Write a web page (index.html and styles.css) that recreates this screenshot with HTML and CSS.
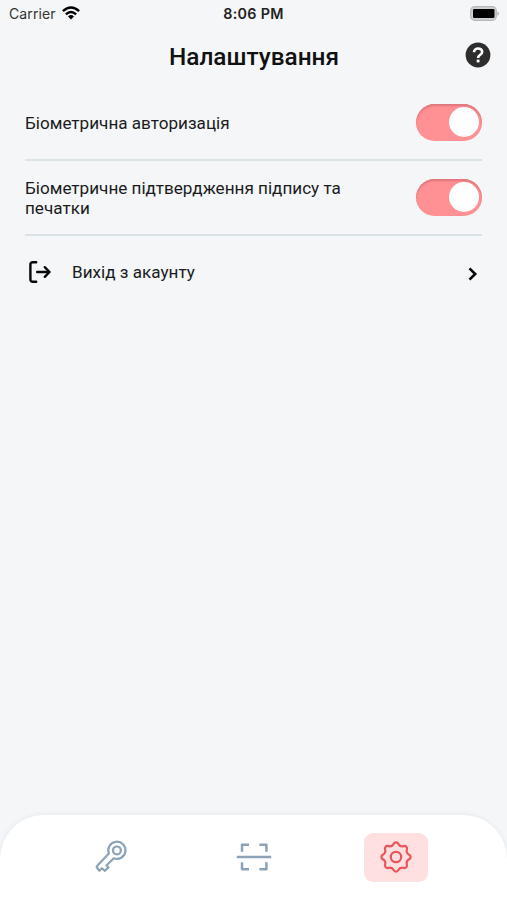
FILE: index.html
```html
<!DOCTYPE html>
<html lang="uk">
<head>
<meta charset="utf-8">
<title>Налаштування</title>
<link rel="stylesheet" href="styles.css">
</head>
<body>
<div class="screen">
  <div class="status">
    <div class="carrier"><span>Carrier</span>
      <svg width="18" height="14" viewBox="0 0 18 14"><g fill="none" stroke="#000" stroke-width="2.5"><path d="M.9 5.2Q9-2.2 17.1 5.2"/><path d="M3.9 8.3Q9 3.6 14.1 8.3"/></g><path d="M6 10.4Q9 7.8 12 10.4L9 13.5z"/></svg>
    </div>
    <span class="time">8:06 PM</span>
    <svg class="battery" width="30" height="15" viewBox="0 0 30 15"><rect x=".7" y=".7" width="25.6" height="13.6" rx="4" fill="#d0d1d2" stroke="#b8b9ba" stroke-width="1.3"/><rect x="3" y="3" width="21.5" height="9" rx="1.2"/><path d="M27.5 5.2q3 2.3 0 4.6z" fill="#aaa"/></svg>
  </div>
  <header class="header">
    <h1>Налаштування</h1>
    <svg class="help" width="26" height="26" viewBox="0 0 26 26"><circle cx="13" cy="13" r="12.4" fill="#2d2d2e"/><path d="M9 10.3C9 5.2 17.2 5.4 17.2 10C17.2 12.9 13.1 12.6 13.1 16" fill="none" stroke="#fff" stroke-width="2.6"/><rect x="11.7" y="17.6" width="2.8" height="2.8" fill="#fff"/></svg>
  </header>
  <main class="list">
    <div class="row"><span class="label">Біометрична авторизація</span><span class="toggle"><i></i></span></div>
    <div class="row"><span class="label">Біометричне підтвердження підпису та печатки</span><span class="toggle"><i></i></span></div>
    <div class="row logout">
      <svg width="24" height="24" viewBox="0 0 24 24" fill="none" stroke="#080808" stroke-width="2.4" stroke-linecap="round" stroke-linejoin="round"><path d="M8.2 2.2H4.8Q2.4 2.2 2.4 4.7V19.3Q2.4 21.8 4.8 21.8H8.2M9.2 12H21.5M16.8 7.2L21.5 12L16.8 16.8"/></svg>
      <span class="label">Вихід з акаунту</span>
      <svg class="chevron" width="10" height="14" viewBox="0 0 10 14" fill="none" stroke="#080808" stroke-width="2.6"><path d="M1.5 1.4L7.2 7L1.5 12.6"/></svg>
    </div>
  </main>
  <nav class="tabs">
    <span class="tab"><svg width="36" height="36" viewBox="93.3 839 36 36" fill="none" stroke="#8ba2b7" stroke-width="2.2" stroke-linejoin="round"><path d="M109.2 853.5A8.6 8.6 0 1 1 114 858.3L106.7 865.5L108.8 867.5L105 870.8L102.3 868.4L99.7 870.7L97 867.3Q97 866.3 98 865.3Z"/><circle cx="117.2" cy="850.4" r="3.9"/></svg></span>
    <span class="tab"><svg width="36" height="36" viewBox="0 0 36 36" fill="none" stroke="#8ba2b7" stroke-width="2.5" stroke-linejoin="round"><path d="M.8 18H35.2M13 5.8H6V12.8M23.4 5.8H30.4V12.8M6 23.2V30.2H13M30.4 23.2V30.2H23.4"/></svg></span>
    <span class="tab active"><svg width="34" height="34" viewBox="-17 -17 34 34" fill="none" stroke="#eb5458" stroke-width="2.2" stroke-linejoin="round"><path d="M13.1-2.31A2.53 2.53 0 0 1 13.1 2.31A4.6 4.6 0 0 0 10.89 7.63A2.53 2.53 0 0 1 7.63 10.89A4.6 4.6 0 0 0 2.31 13.1A2.53 2.53 0 0 1-2.31 13.1A4.6 4.6 0 0 0-7.63 10.89A2.53 2.53 0 0 1-10.89 7.63A4.6 4.6 0 0 0-13.1 2.31A2.53 2.53 0 0 1-13.1-2.31A4.6 4.6 0 0 0-10.89-7.63A2.53 2.53 0 0 1-7.63-10.89A4.6 4.6 0 0 0-2.31-13.1A2.53 2.53 0 0 1 2.31-13.1A4.6 4.6 0 0 0 7.63-10.89A2.53 2.53 0 0 1 10.89-7.63A4.6 4.6 0 0 0 13.1-2.31Z"/><circle r="5.2"/></svg></span>
  </nav>
</div>
</body>
</html>
```
FILE: styles.css
```css
* { box-sizing: border-box; }
body { margin: 0; background: #f4f6f8; color: #1b1b1d; font-family: Roboto, sans-serif; }
svg { display: block; flex: none; }
.screen { height: 900px; display: flex; flex-direction: column; overflow: hidden; }
.status { height: 26px; display: grid; grid-template-columns: 1fr auto 1fr; align-items: center; padding: 0 7px 0 9px; font-family: Inter, sans-serif; font-size: 14px; }
.carrier { display: flex; align-items: center; gap: 6px; letter-spacing: .1px; color: #333; }
.time { font-weight: 600; font-size: 14.3px; letter-spacing: .3px; margin: 1px 2px 0 0; color: #222; }
.battery { justify-self: end; }
.header { height: 60px; display: grid; grid-template-columns: 1fr auto 1fr; align-items: center; padding: 0 16px 2px 17px; }
h1 { grid-column: 2; margin: 4px 0 0; font-size: 24.4px; line-height: 28px; font-weight: 500; color: #111; }
.help { justify-self: end; }
.list { padding: 0 25px; flex: 1; }
.row { height: 75px; display: flex; align-items: center; justify-content: space-between; border-bottom: 2px solid #dae4e8; }
.label { font-size: 17.12px; line-height: 20px; max-width: 330px; }
.toggle { width: 66px; height: 37px; border-radius: 19px; background: #ff9094; box-shadow: inset 0 2px 2px #df777c; padding: 3px 3px 0 0; display: flex; justify-content: flex-end; flex: none; }
.toggle i { width: 30px; height: 30px; border-radius: 50%; background: #fff; }
.logout { border: 0; height: 72px; justify-content: flex-start; padding: 0 4.5px 0 3px; }
.logout .label { margin-left: 20px; }
.chevron { margin: 3px 0 0 auto; }
.tabs { height: 85px; background: #fff; border-radius: 44px 44px 0 0; box-shadow: 0 0 5px #e2e6e9; display: flex; justify-content: space-between; padding: 18px 79px 0; }
.tab { width: 64px; height: 49px; border-radius: 9px; display: flex; align-items: center; justify-content: center; padding-bottom: 2px; }
.active { background: #ffe0e1; }
```
